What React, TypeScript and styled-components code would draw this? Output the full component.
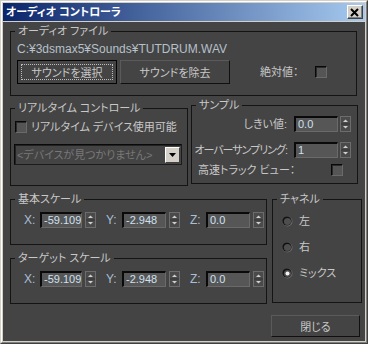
import styled, { createGlobalStyle } from 'styled-components';

const FONT = `"Liberation Sans", "Noto Sans CJK JP", sans-serif`;

const GlobalStyle = createGlobalStyle`
  html, body {
    margin: 0;
    padding: 0;
    background: #d4d0c8;
  }
  body {
    font-family: ${FONT};
    font-size: 11px;
    font-feature-settings: "palt";
  }
`;

function Spinner() {
  return (
    <SpinBox width="11" height="16" viewBox="0 0 11 16">
      <rect x="0.5" y="0.5" width="10" height="15" fill="#4a4a4a" stroke="#6c6c6c" />
      <polygon points="3,6 8,6 5.5,3.5" fill="#d0d0d0" />
      <line x1="1" y1="8" x2="10" y2="8" stroke="#333" />
      <polygon points="3,10 8,10 5.5,12.5" fill="#d0d0d0" />
    </SpinBox>
  );
}

function Radio({ checked }: { checked?: boolean }) {
  return (
    <svg width="11" height="11" viewBox="0 0 11 11">
      <circle cx="5.5" cy="5.5" r="5" fill="#6a6a6a" />
      <circle cx="5" cy="5" r="4.6" fill="#111" />
      <circle cx="5.5" cy="5.5" r="3.6" fill="#4e4e4e" />
      {checked && <circle cx="5.5" cy="5.5" r="2" fill="#f4f4f4" />}
    </svg>
  );
}

function SpinField({ axis, value, w }: { axis: string; value: string; w: number }) {
  return (
    <Field>
      <Axis>{axis}</Axis>
      <NumInput $w={w}>{value}</NumInput>
      <Spinner />
    </Field>
  );
}

function ScaleGroup({ title, first }: { title: string; first?: boolean }) {
  return (
    <Group $w={257} $h={53} $mt={first ? 0 : 6}>
      <Legend>{title}</Legend>
      <ScaleRow>
        <SpinField axis="X:" value="-59.109" w={42} />
        <SpinField axis="Y:" value="-2.948" w={44} />
        <SpinField axis="Z:" value="0.0" w={44} />
      </ScaleRow>
    </Group>
  );
}

export default function App() {
  return (
    <>
      <GlobalStyle />
      <Window>
        <Frame>
          <TitleBar>
            <Title>オーディオ コントローラ</Title>
            <CloseBox>
              <svg width="10" height="9" viewBox="0 0 10 9">
                <path d="M1 1 L8 8 M8 1 L1 8" stroke="#000" strokeWidth="2" />
              </svg>
            </CloseBox>
          </TitleBar>

          <Body>
            <Group $w={347} $h={72}>
              <Legend>オーディオ ファイル</Legend>
              <PathText>C:¥3dsmax5¥Sounds¥TUTDRUM.WAV</PathText>
              <ButtonRow>
                <Button $w={100} $h={24} $focused>サウンドを選択</Button>
                <Button $w={110} $h={24}>サウンドを除去</Button>
                <Label style={{ marginLeft: 27 }}>絶対値：</Label>
                <Check style={{ marginLeft: 'auto', marginRight: 29 }} />
              </ButtonRow>
            </Group>

            <MidRow>
              <Group $w={178} $h={85} $mt={3}>
                <Legend>リアルタイム コントロール</Legend>
                <CheckRow>
                  <Check />
                  <Label>リアルタイム デバイス使用可能</Label>
                </CheckRow>
                <Dropdown>
                  <DropText>&lt;デバイスが見つかりません&gt;</DropText>
                  <DropButton>
                    <svg width="7" height="4" viewBox="0 0 7 4">
                      <polygon points="0,0 7,0 3.5,4" fill="#000" />
                    </svg>
                  </DropButton>
                </Dropdown>
              </Group>

              <Group $w={167} $h={86}>
                <Legend>サンプル</Legend>
                <SampleRow $mt={4}>
                  <Label>しきい値:</Label>
                  <NumInput $w={44}>0.0</NumInput>
                  <Spinner />
                </SampleRow>
                <SampleRow $mt={10}>
                  <Label $tight>オーバーサンプリング:</Label>
                  <NumInput $w={44}>1</NumInput>
                  <Spinner />
                </SampleRow>
                <TrackRow>
                  <Label>高速トラック ビュー：</Label>
                  <Check />
                </TrackRow>
              </Group>
            </MidRow>

            <LowRow>
              <Column>
                <ScaleGroup title="基本スケール" first />
                <ScaleGroup title="ターゲット スケール" />
              </Column>
              <Group $w={90} $h={111}>
                <Legend>チャネル</Legend>
                <RadioList>
                  <RadioRow>
                    <Radio />
                    <Label>左</Label>
                  </RadioRow>
                  <RadioRow>
                    <Radio />
                    <Label>右</Label>
                  </RadioRow>
                  <RadioRow>
                    <Radio checked />
                    <Label>ミックス</Label>
                  </RadioRow>
                </RadioList>
              </Group>
            </LowRow>

            <Footer>
              <Button $w={89} $h={22}>閉じる</Button>
            </Footer>
          </Body>
        </Frame>
      </Window>
    </>
  );
}

const Window = styled.div`
  width: 368px;
  height: 344px;
  box-sizing: border-box;
  border: 1px solid;
  border-color: #d4d0c8 #404040 #404040 #d4d0c8;
  background: #d4d0c8;
  display: flex;
  flex-direction: column;
`;

const Frame = styled.div`
  flex: 1;
  display: flex;
  flex-direction: column;
  gap: 1px;
  padding: 1px;
  border: 1px solid;
  border-color: #fff #808080 #808080 #fff;
  min-height: 0;
`;

const TitleBar = styled.div`
  height: 18px;
  flex-shrink: 0;
  display: flex;
  align-items: center;
  justify-content: space-between;
  padding: 0 2px 0 3px;
  background: linear-gradient(to right, #0a246a, #a6caf0);
`;

const Title = styled.span`
  color: #fff;
  font-weight: bold;
  font-size: 11px;
  line-height: 14px;
`;

const CloseBox = styled.div`
  width: 16px;
  height: 14px;
  box-sizing: border-box;
  display: flex;
  align-items: center;
  justify-content: center;
  background: #d4d0c8;
  border: 1px solid;
  border-color: #fff #404040 #404040 #fff;
  box-shadow: inset -1px -1px 0 #808080;
`;

const Body = styled.div`
  flex: 1;
  background: #444444;
  padding: 2px 4px 0 7px;
  display: flex;
  flex-direction: column;
  color: #c8c8c8;
`;

const Group = styled.fieldset<{ $w: number; $h: number; $mt?: number }>`
  box-sizing: border-box;
  width: ${(p) => p.$w}px;
  height: ${(p) => p.$h}px;
  margin: ${(p) => p.$mt ?? 0}px 0 0 0;
  padding: 0;
  min-width: 0;
  border: 1px solid #141414;
  flex-shrink: 0;
`;

const Legend = styled.legend`
  margin-left: 4px;
  padding: 0 3px;
  line-height: 14px;
  font-size: 11px;
  color: #c8c8c8;
  white-space: nowrap;
`;

const Label = styled.span<{ $tight?: boolean }>`
  line-height: 14px;
  white-space: nowrap;
  color: #c8c8c8;
  letter-spacing: ${(p) => (p.$tight ? '-1px' : 'normal')};
`;

const PathText = styled.div`
  margin: 4px 0 0 6px;
  line-height: 14px;
  font-size: 12px;
  color: #b6c0ca;
`;

const ButtonRow = styled.div`
  margin-top: 4px;
  padding-left: 6px;
  display: flex;
  align-items: center;
  gap: 3px;
`;

const Button = styled.button<{ $w: number; $h: number; $focused?: boolean }>`
  box-sizing: border-box;
  width: ${(p) => p.$w}px;
  height: ${(p) => p.$h}px;
  padding: 0;
  background: #444444;
  color: #c8c8c8;
  font: inherit;
  font-size: 11px;
  border: 1px solid;
  border-color: ${(p) => (p.$focused ? '#050505' : '#5a5a5a #101010 #101010 #5a5a5a')};
  outline: ${(p) => (p.$focused ? '1px dotted #bdbdbd' : 'none')};
  outline-offset: -5px;
`;

const Check = styled.span`
  box-sizing: border-box;
  width: 12px;
  height: 12px;
  flex-shrink: 0;
  background: #555555;
  border: 1px solid;
  border-color: #080808 #6a6a6a #6a6a6a #080808;
  box-shadow: inset 1px 1px 0 #2a2a2a;
`;

const MidRow = styled.div`
  margin-top: 2px;
  display: flex;
  align-items: flex-start;
  gap: 3px;
`;

const CheckRow = styled.div`
  margin: 5px 0 0 4px;
  display: flex;
  align-items: center;
  gap: 4px;
  height: 14px;
`;

const Dropdown = styled.div`
  box-sizing: border-box;
  margin: 10px 0 0 3px;
  width: 168px;
  height: 21px;
  display: flex;
  align-items: center;
  justify-content: space-between;
  padding: 0 1px 0 2px;
  border: 1px solid;
  border-color: #0a0a0a #1c1c1c #1c1c1c #0a0a0a;
  box-shadow: inset 1px 1px 0 #222;
`;

const DropText = styled.span`
  color: #787878;
  line-height: 14px;
  white-space: nowrap;
`;

const DropButton = styled.div`
  box-sizing: border-box;
  width: 15px;
  height: 16px;
  display: flex;
  align-items: center;
  justify-content: center;
  background: #d4d0c8;
  border: 1px solid;
  border-color: #fff #404040 #404040 #fff;
`;

const SampleRow = styled.div<{ $mt: number }>`
  margin-top: ${(p) => p.$mt}px;
  padding-right: 6px;
  display: flex;
  align-items: center;
  justify-content: flex-end;

  & > span {
    margin-right: 7px;
  }

  & > svg {
    margin-left: 2px;
  }
`;

const TrackRow = styled.div`
  margin-top: 5px;
  padding: 0 14px 0 6px;
  display: flex;
  align-items: center;
  justify-content: space-between;
`;

const NumInput = styled.div<{ $w: number }>`
  box-sizing: border-box;
  width: ${(p) => p.$w}px;
  height: 16px;
  flex-shrink: 0;
  padding-left: 2px;
  background: #565656;
  color: #cfe0f0;
  font-size: 11px;
  line-height: 13px;
  border-style: solid;
  border-width: 2px 1px 1px 2px;
  border-color: #0a0a0a #6a6a6a #6a6a6a #0a0a0a;
  white-space: nowrap;
  overflow: hidden;
`;

const SpinBox = styled.svg`
  flex-shrink: 0;
  display: block;
`;

const LowRow = styled.div`
  margin-top: 6px;
  display: flex;
  align-items: flex-start;
  gap: 5px;
`;

const Column = styled.div`
  display: flex;
  flex-direction: column;
`;

const ScaleRow = styled.div`
  margin: 6px 0 0 13px;
  display: flex;
  align-items: center;
  gap: 10px;
`;

const Field = styled.div`
  display: flex;
  align-items: center;

  & > svg {
    margin-left: 3px;
  }
`;

const Axis = styled.span`
  width: 16px;
  color: #a9bfd6;
  font-size: 12px;
  line-height: 14px;
`;

const RadioList = styled.div`
  margin: 8px 0 0 9px;
  display: flex;
  flex-direction: column;
  gap: 12px;
`;

const RadioRow = styled.div`
  height: 14px;
  display: flex;
  align-items: center;
  gap: 6px;
`;

const Footer = styled.div`
  margin-top: 11px;
  display: flex;
  justify-content: flex-end;
  padding-right: 1px;
`;
